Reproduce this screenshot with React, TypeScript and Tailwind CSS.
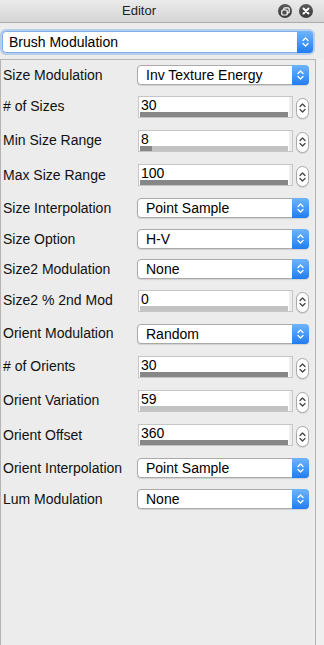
import React from "react";

type Row =
  | { kind: "select"; label: string; value: string; h: string }
  | { kind: "input"; label: string; value: string; fill: number; dark: boolean; h: string };

const rows: Row[] = [
  { kind: "select", label: "Size Modulation", value: "Inv Texture Energy", h: "h-[30px]" },
  { kind: "input", label: "# of Sizes", value: "30", fill: 1, dark: true, h: "h-[33px]" },
  { kind: "input", label: "Min Size Range", value: "8", fill: 0.08, dark: true, h: "h-[35px]" },
  { kind: "input", label: "Max Size Range", value: "100", fill: 1, dark: true, h: "h-[34px]" },
  { kind: "select", label: "Size Interpolation", value: "Point Sample", h: "h-[32px]" },
  { kind: "select", label: "Size Option", value: "H-V", h: "h-[30px]" },
  { kind: "select", label: "Size2 Modulation", value: "None", h: "h-[30px]" },
  { kind: "input", label: "Size2 % 2nd Mod", value: "0", fill: 0, dark: false, h: "h-[33px]" },
  { kind: "select", label: "Orient Modulation", value: "Random", h: "h-[33px]" },
  { kind: "input", label: "# of Orients", value: "30", fill: 1, dark: true, h: "h-[33px]" },
  { kind: "input", label: "Orient Variation", value: "59", fill: 0, dark: false, h: "h-[35px]" },
  { kind: "input", label: "Orient Offset", value: "360", fill: 1, dark: true, h: "h-[34px]" },
  { kind: "select", label: "Orient Interpolation", value: "Point Sample", h: "h-[32px]" },
  { kind: "select", label: "Lum Modulation", value: "None", h: "h-[30px]" },
];

function UpDown({ color }: { color: string }) {
  return (
    <svg width="7" height="12" viewBox="0 0 7 12" fill="none">
      <path d="M1 4.5 L3.5 2 L6 4.5" stroke={color} strokeWidth="1.3" strokeLinecap="round" strokeLinejoin="round" />
      <path d="M1 7.5 L3.5 10 L6 7.5" stroke={color} strokeWidth="1.3" strokeLinecap="round" strokeLinejoin="round" />
    </svg>
  );
}

function Select({ value }: { value: string }) {
  return (
    <div className="flex h-[20px] w-[172px] rounded-[4px] border border-[#aaaaaa] bg-white shadow-[0_1px_1px_rgba(0,0,0,0.12)]">
      <span className="flex-1 truncate pl-[8px] text-[14px] leading-[18px] text-black">{value}</span>
      <div className="-my-px -mr-px flex w-[17px] items-center justify-center rounded-r-[4px] bg-gradient-to-b from-[#6db4fb] to-[#1f7cf0]">
        <UpDown color="#ffffff" />
      </div>
    </div>
  );
}

function NumberField({ value, fill, dark }: { value: string; fill: number; dark: boolean }) {
  return (
    <div className="flex items-center">
      <div className="flex h-[22px] w-[155px] border border-[#c6c6c6] bg-white">
        <div className="flex flex-1 flex-col pl-[1px]">
          <span className="pl-[1px] pt-[1px] text-[14px] leading-[14px] text-black">{value}</span>
          <div className="mt-auto h-[5px] w-[148px] shrink-0 bg-[#c2c2c2]">
            <div className={dark ? "h-full bg-[#878787]" : "h-full bg-[#c2c2c2]"} style={{ width: `${fill * 100}%` }} />
          </div>
        </div>
        <div className="w-[3px] bg-[#eeeeee]" />
      </div>
      <div className="ml-[3px] mt-[3px] flex h-[21px] w-[13px] items-center justify-center rounded-full border border-[#a9a9a9] bg-white shadow-[0_1px_1px_rgba(0,0,0,0.1)]">
        <UpDown color="#444444" />
      </div>
    </div>
  );
}

export default function App() {
  return (
    <div className="flex h-[645px] w-[324px] flex-col bg-[#ececec] font-['Liberation_Sans',Arial,sans-serif]">
      <div className="flex h-[23px] items-center border-b border-[#ababab] bg-gradient-to-b from-[#ebebeb] to-[#d5d5d5]">
        <span className="flex-1 text-center text-[13px] text-[#222]">Editor</span>
        <div className="flex items-center gap-[7px] pr-[11px]">
          <div className="flex h-[14px] w-[14px] items-center justify-center rounded-full bg-gradient-to-b from-[#5a5a5a] to-[#3a3a3a]">
            <svg width="9" height="9" viewBox="0 0 9 9" fill="none">
              <rect x="2.8" y="0.8" width="5.4" height="5" rx="1" stroke="#fff" strokeWidth="1.2" />
              <rect x="0.8" y="3" width="5.4" height="5" rx="1" fill="#4a4a4a" stroke="#fff" strokeWidth="1.2" />
            </svg>
          </div>
          <div className="flex h-[14px] w-[14px] items-center justify-center rounded-full bg-gradient-to-b from-[#5a5a5a] to-[#3a3a3a]">
            <svg width="8" height="8" viewBox="0 0 8 8">
              <path d="M1.5 1.5 L6.5 6.5 M6.5 1.5 L1.5 6.5" stroke="#fff" strokeWidth="2" strokeLinecap="round" />
            </svg>
          </div>
        </div>
      </div>

      <div className="px-[2px] pt-[8px]">
        <div className="flex h-[22px] w-[311px] rounded-[4px] border border-[#7fb0ea] bg-white shadow-[0_0_0_2px_rgba(120,170,235,0.45)]">
          <span className="flex-1 pl-[6px] text-[14px] leading-[20px] text-black">Brush Modulation</span>
          <div className="-my-px -mr-px flex w-[16px] items-center justify-center rounded-r-[4px] bg-gradient-to-b from-[#6db4fb] to-[#1f7cf0]">
            <UpDown color="#ffffff" />
          </div>
        </div>
      </div>

      <div className="mt-[6px] flex flex-1">
        <div className="flex w-[316px] flex-col border-l border-r border-t border-[#b4b4b4]">
          {rows.map((r) => (
            <div key={r.label} className={`flex items-center pl-[2px] ${r.h}`}>
              <span className="w-[134px] shrink-0 text-[14px] text-[#111]">{r.label}</span>
              {r.kind === "select" ? (
                <Select value={r.value} />
              ) : (
                <div className="pl-[1px]">
                  <NumberField value={r.value} fill={r.fill} dark={r.dark} />
                </div>
              )}
            </div>
          ))}
        </div>
        <div className="flex-1 bg-[#efefef]" />
      </div>
    </div>
  );
}
